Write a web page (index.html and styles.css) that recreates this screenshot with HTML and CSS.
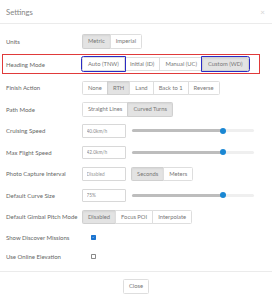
FILE: index.html
```html
<!DOCTYPE html>
<html lang="en">
<head>
    <meta charset="UTF-8">
    <meta name="viewport" content="width=device-width, initial-scale=1.0">
    <title>Settings</title>
    <link rel="stylesheet" href="styles.css">
</head>
<body>
    <div class="modal">
        <div class="modal-header">
            <h4 class="modal-title">Settings</h4>
            <span class="close">&times;</span>
        </div>

        <div class="modal-body">
            <div class="row">
                <label>Units</label>
                <div class="btn-group">
                    <button class="btn active">Metric</button>
                    <button class="btn">Imperial</button>
                </div>
            </div>

            <!-- highlighted row -->
            <div class="row highlight">
                <label>Heading Mode</label>
                <div class="btn-group">
                    <button class="btn marked">Auto (TNW)</button>
                    <button class="btn">Initial (ID)</button>
                    <button class="btn">Manual (UC)</button>
                    <button class="btn active marked">Custom (WD)</button>
                </div>
            </div>

            <div class="row">
                <label>Finish Action</label>
                <div class="btn-group">
                    <button class="btn">None</button>
                    <button class="btn active">RTH</button>
                    <button class="btn">Land</button>
                    <button class="btn">Back to 1</button>
                    <button class="btn">Reverse</button>
                </div>
            </div>

            <div class="row">
                <label>Path Mode</label>
                <div class="btn-group">
                    <button class="btn">Straight Lines</button>
                    <button class="btn active">Curved Turns</button>
                </div>
            </div>

            <div class="row">
                <label>Cruising Speed</label>
                <input class="field" type="text" value="40.0km/h">
                <div class="slider"><div class="fill" style="width: 74.6%"></div><span class="thumb"></span></div>
            </div>

            <div class="row">
                <label>Max Flight Speed</label>
                <input class="field" type="text" value="42.0km/h">
                <div class="slider"><div class="fill" style="width: 74.6%"></div><span class="thumb"></span></div>
            </div>

            <div class="row">
                <label>Photo Capture Interval</label>
                <input class="field" type="text" placeholder="Disabled">
                <div class="btn-group spaced">
                    <button class="btn active">Seconds</button>
                    <button class="btn">Meters</button>
                </div>
            </div>

            <div class="row">
                <label>Default Curve Size</label>
                <input class="field" type="text" value="75%">
                <div class="slider"><div class="fill" style="width: 74.8%"></div><span class="thumb"></span></div>
            </div>

            <div class="row">
                <label>Default Gimbal Pitch Mode</label>
                <div class="btn-group">
                    <button class="btn active">Disabled</button>
                    <button class="btn">Focus POI</button>
                    <button class="btn">Interpolate</button>
                </div>
            </div>

            <div class="row check-row">
                <label>Show Discover Missions</label>
                <span class="checkbox checked">
                    <svg viewBox="0 0 10 10"><path d="M2.2 5.2 L4.2 7.2 L7.9 2.9" fill="none" stroke="#fff" stroke-width="1.6"/></svg>
                </span>
            </div>

            <div class="row check-row">
                <label>Use Online Elevation</label>
                <span class="checkbox"></span>
            </div>
        </div>

        <div class="modal-footer">
            <button class="btn">Close</button>
        </div>
    </div>
</body>
</html>
```

FILE: styles.css
```css
html, body {
    margin: 0;
    background: #fff;
}
body {
    font-family: Lato, "Open Sans", sans-serif;
    color: #666;
}
.modal {
    width: 272px;
    height: 300px;
    background: #fff;
}
.modal-header {
    height: 23px;
    border-bottom: 1px solid #ebebeb;
    display: flex;
    align-items: center;
    justify-content: space-between;
    padding: 0 6px;
}
.modal-title {
    margin: 0;
    font-size: 7.7px;
    font-weight: normal;
    color: #858585;
}
.close {
    font-size: 8px;
    color: #d4d4d4;
    margin-right: 1px;
}
.modal-body {
    padding: 10px 6px 8px 6px;
}
.row {
    display: flex;
    align-items: center;
    height: 14.5px;
    margin-bottom: 7px;
}
.row label {
    width: 76px;
    flex: none;
    font-size: 6px;
    color: #666;
}
.row:first-child {
    margin-bottom: 5.5px;
}
.highlight {
    height: 18px;
    margin-left: -4px;
    padding-left: 3px;
    width: 253px;
    border: 1px solid #e03a3a;
    margin-bottom: 6.5px;
}
.check-row {
    height: 13px;
    margin-bottom: 6px;
}
.check-row:last-child {
    margin-bottom: 0;
}
.btn-group {
    display: flex;
}
.btn-group.spaced {
    margin-left: 5px;
}
.btn {
    font-family: Lato, "Open Sans", sans-serif;
    font-size: 5.8px;
    color: #777;
    height: 14.5px;
    padding: 0 5px;
    background: #fff;
    border: 1px solid #dedede;
    border-radius: 1.5px;
    line-height: 1;
}
.btn-group .btn {
    border-radius: 0;
    margin-left: -1px;
}
.btn-group .btn:first-child {
    margin-left: 0;
    border-radius: 1.5px 0 0 1.5px;
}
.btn-group .btn:last-child {
    border-radius: 0 1.5px 1.5px 0;
}
.btn.active {
    background: #e3e3e3;
    border-color: #d0d0d0;
    box-shadow: inset 0 1px 2px rgba(0, 0, 0, 0.06);
}
.btn.marked {
    position: relative;
    z-index: 1;
    outline: 1.2px solid #2b2bc4;
}
.field {
    width: 44px;
    height: 13.5px;
    box-sizing: border-box;
    border: 1px solid #d8d8d8;
    border-radius: 1px;
    padding: 0 3.5px;
    font-family: Lato, "Open Sans", sans-serif;
    font-size: 4.8px;
    color: #8a8a8a;
    flex: none;
}
.field::placeholder {
    color: #9a9a9a;
}
.slider {
    position: relative;
    width: 122px;
    height: 3px;
    margin-left: 6px;
    background: #efefef;
    border-radius: 2px;
}
.slider .fill {
    height: 100%;
    background: #bdbdbd;
    border-radius: 2px;
}
.slider .thumb {
    position: absolute;
    top: -1.5px;
    left: 74.6%;
    width: 6px;
    height: 6px;
    margin-left: -3px;
    border-radius: 50%;
    background: #1a87d3;
}
.checkbox {
    width: 4.5px;
    height: 4.5px;
    margin-left: 9px;
    box-sizing: border-box;
    border: 0.8px solid #8a8a8a;
    border-radius: 0.8px;
    display: flex;
}
.checkbox.checked {
    background: #1a73d0;
    border-color: #1a73d0;
}
.checkbox svg {
    width: 100%;
    height: 100%;
}
.modal-footer {
    border-top: 1px solid #ebebeb;
    display: flex;
    justify-content: center;
    padding-top: 7px;
}
```
